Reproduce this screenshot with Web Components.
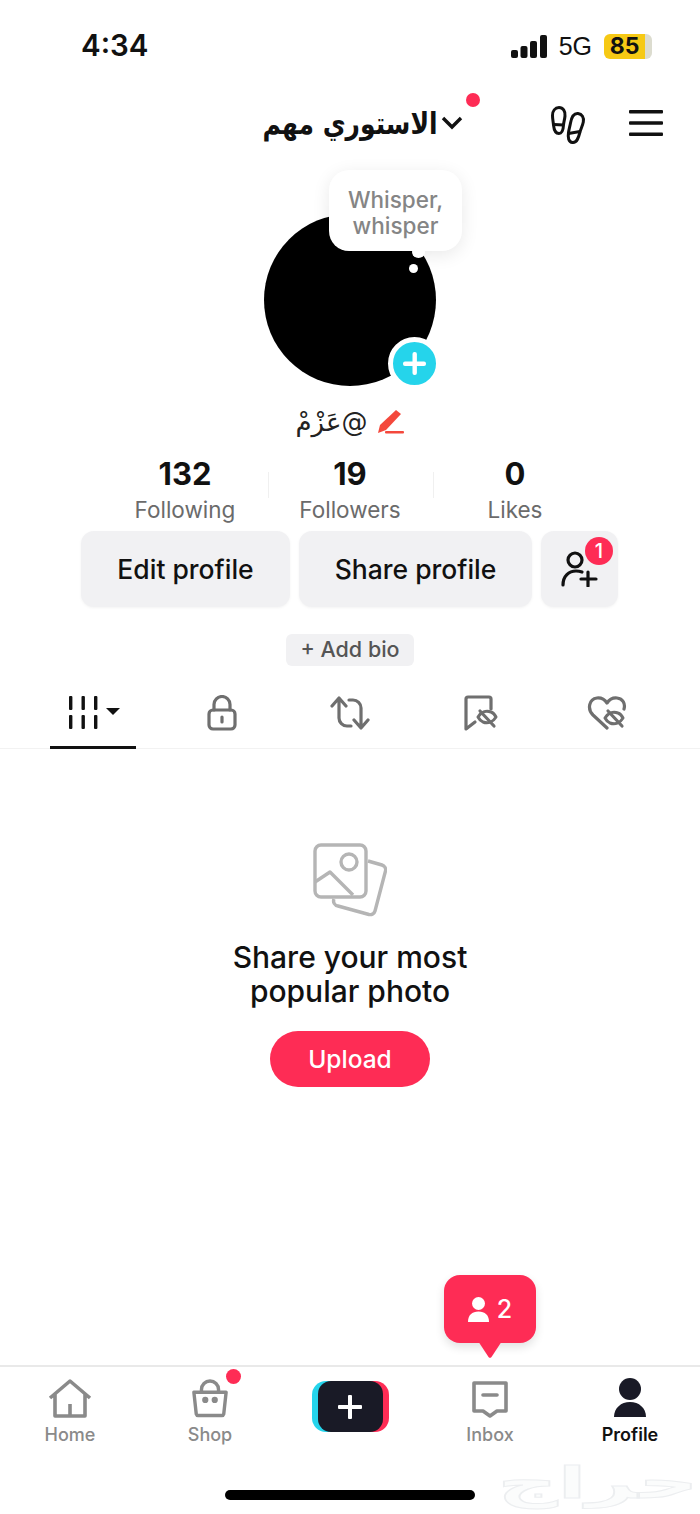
<!DOCTYPE html>
<html lang="en">
<head>
<meta charset="utf-8">
<title>Profile</title>
<style>
  html, body { margin: 0; background: #fff; }
  body { font-family: Inter, "Liberation Sans", sans-serif; color: #111; }
</style>
</head>
<body>
<profile-app>
  <status-bar slot="top" time="4:34" level="85"></status-bar>
  <top-nav slot="top" title="الاستوري مهم"></top-nav>
  <profile-head slot="top" handle="@عَزْمْ" note="Whisper, whisper"></profile-head>
  <profile-stats slot="top"></profile-stats>
  <profile-actions slot="top"></profile-actions>
  <profile-tabs slot="top"></profile-tabs>
  <empty-state slot="top"></empty-state>
  <friend-badge slot="over" count="2"></friend-badge>
  <bottom-nav slot="bottom"></bottom-nav>
</profile-app>

<script>
class ProfileApp extends HTMLElement {
  constructor() {
    super();
    this.attachShadow({ mode: 'open' }).innerHTML = `
    <style>
      :host { display: flex; flex-direction: column; position: relative; width: 700px; height: 1514px; overflow: hidden; background: #fff; }
      .top { display: block; flex: 1; }
    </style>
    <div class="top"><slot name="top"></slot></div>
    <slot name="over"></slot>
    <slot name="bottom"></slot>`;
  }
}

class StatusBar extends HTMLElement {
  constructor() {
    super();
    this.attachShadow({ mode: 'open' }).innerHTML = `
    <style>
      :host { display: flex; align-items: center; justify-content: space-between; height: 92px; padding: 0 48px 0 81px; box-sizing: border-box; }
      .time { font: 600 29.500px/1 Inter, sans-serif; color: #111; }
      .right { display: flex; align-items: center; }
      svg { display: block; }
      .net { font: 400 25px/1 "Liberation Sans", sans-serif; margin: 0 12px; }
      .batt { display: flex; align-items: center; justify-content: center; width: 41px; height: 25px; background: #f6c915; border-radius: 6px 0 0 6px; font: 700 23px/1 Inter, sans-serif; }
      .end { width: 7px; height: 25px; background: #dcdccf; border-radius: 0 6px 6px 0; }
    </style>
    <span class="time">${this.getAttribute('time')}</span>
    <div class="right">
      <svg width="36" height="23" viewBox="0 0 36 23" fill="#111">
        <rect x="0" y="15" width="7" height="8" rx="2"/><rect x="9.5" y="11" width="7" height="12" rx="2"/>
        <rect x="19" y="6" width="7" height="17" rx="2"/><rect x="29" y="0" width="7" height="23" rx="2"/>
      </svg>
      <span class="net">5G</span>
      <span class="batt">${this.getAttribute('level')}</span><span class="end"></span>
    </div>`;
  }
}

class TopNav extends HTMLElement {
  constructor() {
    super();
    this.attachShadow({ mode: 'open' }).innerHTML = `
    <style>
      :host { display: flex; align-items: center; height: 62px; position: relative; padding-left: 262px; box-sizing: border-box; }
      .title { font: 700 25px/1 "DejaVu Sans", sans-serif; color: #111; width: 176px; white-space: nowrap; display: flex; justify-content: center; transform: scaleY(1.200); }
      .chev { margin-left: 3px; }
      .dot { position: absolute; left: 466px; top: 1px; width: 14px; height: 14px; border-radius: 50%; background: #fe2c55; }
      .feet { margin-left: 87px; overflow: visible; }
      .menu { margin-left: 43px; }
      svg { display: block; }
    </style>
    <span class="title" dir="rtl">${this.getAttribute('title')}</span>
    <svg class="chev" width="22" height="14" viewBox="0 0 22 14" fill="none" stroke="#111" stroke-width="3.400"><path d="M2 2l9 9 9-9"/></svg>
    <span class="dot"></span>
    <svg class="feet" width="36" height="38" viewBox="0 0 36 38" fill="none" stroke="#111" stroke-width="3">
      <path d="M9 3.500c4 0 6.500 3.500 6 8.500-.4 4-1.300 6-1.500 9-.2 4-.6 8.500-4.500 8.500-3.500 0-5-3.500-5.500-8.500C3.200 17.500 2.500 15 2.500 11.500 2.500 7 5 3.500 9 3.500z"/>
      <path d="M4 20.500l9.500.5"/>
      <path d="M28 9.500c4 .5 6.200 4 5.300 8.500-.7 3.500-2.300 6.500-3.300 10-1.200 4.500-2.500 11-7.500 10.500-4-.4-4.800-5-4-10 .5-3.300 1.300-6 2-9.500C21.500 13.500 23.500 9 28 9.500z"/>
      <path d="M18.500 29.500l11.500-2"/>
    </svg>
    <svg class="menu" width="34" height="26" viewBox="0 0 34 26" fill="#111">
      <rect width="34" height="3.600" rx="1"/><rect y="11.200" width="34" height="3.600" rx="1"/><rect y="22.400" width="34" height="3.600" rx="1"/>
    </svg>`;
  }
}

class ProfileHead extends HTMLElement {
  constructor() {
    super();
    this.attachShadow({ mode: 'open' }).innerHTML = `
    <style>
      :host { display: flex; flex-direction: column; align-items: center; padding-top: 60px; }
      .avatar { position: relative; width: 172px; height: 172px; border-radius: 50%; background: #000; }
      .note { position: absolute; left: 65px; top: -44px; width: 133px; height: 81px; box-sizing: border-box; padding: 5px 12px 0; display: flex; align-items: center; justify-content: center; text-align: center; background: #fff; border-radius: 20px; box-shadow: 0 4px 18px rgba(0,0,0,.09); font: 500 22.500px/26px Inter, sans-serif; color: #858585; }
      .bump { position: absolute; left: 148px; top: 32px; width: 13px; height: 12px; background: #fff; border-radius: 50%; }
      .spot { position: absolute; left: 145px; top: 50px; width: 9px; height: 9px; background: #fff; border-radius: 50%; }
      .add { position: absolute; left: 124px; top: 123px; width: 43px; height: 43px; border: 5px solid #fff; border-radius: 50%; background: #25d4eb; display: flex; align-items: center; justify-content: center; }
      .handle { display: flex; align-items: center; gap: 10px; height: 42px; margin-top: 15px; }
      .name { font: 400 26px/42px "DejaVu Sans", sans-serif; color: #222; }
      svg { display: block; }
    </style>
    <div class="avatar">
      <div class="note">${this.getAttribute('note')}</div>
      <span class="bump"></span>
      <span class="spot"></span>
      <span class="add">
        <svg width="23" height="23" viewBox="0 0 23 23" fill="#fff"><rect x="9.500" y="0" width="4.400" height="23" rx="2"/><rect x="0" y="9.500" width="23" height="4.400" rx="2"/></svg>
      </span>
    </div>
    <div class="handle">
      <span class="name" dir="rtl">${this.getAttribute('handle')}</span>
      <svg width="27" height="24" viewBox="0 0 27 24"><path d="M19 0l5 4L9 20l-8 3 2-8z" fill="#f4483c"/><rect x="8" y="21" width="19" height="2.400" rx="1" fill="#f4483c"/></svg>
    </div>`;
  }
}

class ProfileStats extends HTMLElement {
  constructor() {
    super();
    const stats = [['132', 'Following'], ['19', 'Followers'], ['0', 'Likes']];
    this.attachShadow({ mode: 'open' }).innerHTML = `
    <style>
      :host { display: flex; justify-content: center; padding-top: 13px; }
      .stat { width: 165px; text-align: center; position: relative; height: 75px; }
      .stat + .stat::before { content: ""; position: absolute; left: 0; top: 16px; width: 1px; height: 26px; background: #f0f0f0; }
      b { display: block; font: 700 31px/36px Inter, sans-serif; color: #111; }
      span { display: block; font: 400 22.500px/36px Inter, sans-serif; color: #6b6b6b; }
    </style>
    ${stats.map(s => `<div class="stat"><b>${s[0]}</b><span>${s[1]}</span></div>`).join('')}`;
  }
}

class ProfileActions extends HTMLElement {
  constructor() {
    super();
    this.attachShadow({ mode: 'open' }).innerHTML = `
    <style>
      :host { display: flex; flex-direction: column; align-items: center; }
      .row { display: flex; gap: 9px; width: 537px; height: 76px; margin-left: -1px; }
      .btn { display: flex; align-items: center; justify-content: center; background: #f1f1f3; border-radius: 13px; box-shadow: 0 1px 3px rgba(0,0,0,.05); font: 500 26.500px/1 Inter, sans-serif; color: #111; position: relative; }
      .edit { width: 209px; }
      .share { width: 233px; }
      .friends { width: 77px; }
      .count { position: absolute; left: 44px; top: 6px; width: 28px; height: 28px; border-radius: 50%; background: #fe2c55; color: #fff; font: 500 20px/28px Inter, sans-serif; text-align: center; }
      .bio { margin-top: 27px; width: 128px; height: 32px; display: flex; align-items: center; justify-content: center; background: #f1f1f3; border-radius: 6px; font: 500 21.500px/1 Inter, sans-serif; color: #555; }
      svg { display: block; }
    </style>
    <div class="row">
      <div class="btn edit">Edit profile</div>
      <div class="btn share">Share profile</div>
      <div class="btn friends">
        <svg width="38" height="36" viewBox="0 0 38 36" fill="none" stroke="#111" stroke-width="3.200" stroke-linecap="round"><circle cx="14" cy="9" r="7"/><path d="M2 34c0-9 6-14 13-14 2 0 4 .3 6 1"/><path d="M27 21v14M20 28h15"/></svg>
        <span class="count">1</span>
      </div>
    </div>
    <div class="bio">+ Add bio</div>`;
  }
}

class ProfileTabs extends HTMLElement {
  constructor() {
    super();
    const g = 'fill="none" stroke="#6f6f6f" stroke-width="3.200" stroke-linecap="round" stroke-linejoin="round"';
    this.attachShadow({ mode: 'open' }).innerHTML = `
    <style>
      :host { display: grid; grid-template-columns: repeat(5, 128.500px); justify-content: center; height: 68px; border-bottom: 1px solid #f2f2f2; box-sizing: border-box; margin-top: 15px; }
      .tab { display: flex; align-items: center; justify-content: center; position: relative; padding-bottom: 4px; }
      .tab.on::after { content: ""; position: absolute; left: 21px; bottom: -1px; width: 86px; height: 3px; background: #111; }
      .tab.on svg { margin-left: 3px; }
      .mark { margin-left: 6px; }
      svg { display: block; }
    </style>
    <div class="tab on">
      <svg width="52" height="34" viewBox="0 0 52 34" fill="#111">
        <rect x="0" y="0" width="3.400" height="14" rx="1"/><rect x="12.500" y="0" width="3.400" height="14" rx="1"/><rect x="25" y="0" width="3.400" height="14" rx="1"/>
        <rect x="0" y="19" width="3.400" height="14" rx="1"/><rect x="12.500" y="19" width="3.400" height="14" rx="1"/><rect x="25" y="19" width="3.400" height="14" rx="1"/>
        <path d="M37 12h14l-7 7z"/>
      </svg>
    </div>
    <div class="tab">
      <svg width="30" height="36" viewBox="0 0 30 36" ${g}><rect x="2" y="15" width="26" height="19" rx="4"/><path d="M7 15V9.500a8 8 0 0 1 16 0V15"/><path d="M15 22v5"/></svg>
    </div>
    <div class="tab">
      <svg width="40" height="34" viewBox="0 0 40 34" ${g}><path d="M2 10l7-8 7 8M9 3v19a8 8 0 0 0 8 8h4"/><path d="M38 24l-7 8-7-8M31 31V12a8 8 0 0 0-8-8h-4"/></svg>
    </div>
    <div class="tab">
      <svg class="mark" width="36" height="36" viewBox="0 0 36 36" ${g}><path d="M27 14V4a2 2 0 0 0-2-2H4a2 2 0 0 0-2 2v30l9-7"/><path d="M14 22c3-5 8-7 13-5 3 1 4 3 5 5-3 5-8 7-13 5-2-1-4-3-5-5z" stroke-width="3"/><path d="M16 16l14 15"/></svg>
    </div>
    <div class="tab">
      <svg width="40" height="34" viewBox="0 0 40 34" ${g}><path d="M20 32L6 19C0 13 2 3 10 2c5-.5 8 2 10 5 2-3 5-5.500 10-5 6 .5 8.500 6 7 11"/><path d="M18 22c3-5 8-7 13-5 3 1 4 3 5 5-3 5-8 7-13 5-2-1-4-3-5-5z" stroke-width="3"/><path d="M21 15l14 15"/></svg>
    </div>`;
  }
}

class EmptyState extends HTMLElement {
  constructor() {
    super();
    this.attachShadow({ mode: 'open' }).innerHTML = `
    <style>
      :host { display: flex; flex-direction: column; align-items: center; padding-top: 94px; }
      h2 { margin: 21px 0 0; font: 500 30px/34px Inter, sans-serif; color: #111; text-align: center; }
      .upload { margin-top: 23px; width: 160px; height: 56px; display: flex; align-items: center; justify-content: center; border-radius: 28px; background: #fe2c55; color: #fff; font: 500 24.500px/1 Inter, sans-serif; }
      svg { display: block; }
    </style>
    <svg width="74" height="76" viewBox="0 0 74 76" fill="none" stroke="#b5b5b5" stroke-width="3.400" stroke-linejoin="round">
      <rect x="2" y="2" width="51" height="52" rx="6"/>
      <circle cx="36" cy="19" r="8"/>
      <path d="M2 39l15-10 23 23"/>
      <path d="M55 18l14 4a5 5 0 0 1 3.500 6L62 68a5 5 0 0 1-6 3.500l-31-8.500a5 5 0 0 1-4-7"/>
    </svg>
    <h2>Share your most<br>popular photo</h2>
    <div class="upload">Upload</div>`;
  }
}

class FriendBadge extends HTMLElement {
  constructor() {
    super();
    this.attachShadow({ mode: 'open' }).innerHTML = `
    <style>
      :host { position: absolute; left: 444px; top: 1275px; width: 92px; height: 68px; background: #fe2c55; border-radius: 16px; box-shadow: 0 4px 10px rgba(0,0,0,.12); display: flex; align-items: center; justify-content: center; gap: 8px; color: #fff; font: 500 25px/1 Inter, sans-serif; }
      .tail { position: absolute; left: 34px; top: 66px; }
      svg { display: block; }
    </style>
    <svg width="21" height="25" viewBox="0 0 21 25" fill="#fff"><circle cx="10.500" cy="6.500" r="6.500"/><path d="M0 25c0-7 4-10.500 10.500-10.500S21 18 21 25z"/></svg>
    <span>${this.getAttribute('count')}</span>
    <svg class="tail" width="24" height="17" viewBox="0 0 24 17" fill="#fe2c55"><path d="M0 0h24L13.500 16a2 2 0 0 1-3 0z"/></svg>`;
  }
}

class BottomNav extends HTMLElement {
  constructor() {
    super();
    const g = 'fill="none" stroke="#8a8a8a" stroke-width="3.600" stroke-linejoin="round"';
    this.attachShadow({ mode: 'open' }).innerHTML = `
    <style>
      :host { display: block; height: 149px; position: relative; border-top: 2px solid #e9e9e9; box-sizing: border-box; }
      .items { display: grid; grid-template-columns: repeat(5, 140px); height: 78px; padding-top: 11px; }
      .item { display: flex; flex-direction: column; align-items: center; position: relative; font: 500 18px/22px Inter, sans-serif; color: #8a8a8a; }
      .item svg { height: 40px; display: block; margin-bottom: 6px; }
      .item.on { color: #111; font-weight: 600; }
      .dot { position: absolute; left: 86px; top: -9px; width: 15px; height: 15px; border-radius: 50%; background: #fe2c55; }
      .plus { width: 77px; height: 51px; margin-top: 3px; border-radius: 14px; position: relative; background: linear-gradient(90deg, #25d4eb 50%, #fe2c55 50%); }
      .plus div { position: absolute; left: 6px; right: 6px; top: 0; bottom: 0; border-radius: 13px; background: #191a26; display: flex; align-items: center; justify-content: center; }
      .plus svg { margin: 0; height: 24px; }
      .home-bar { position: absolute; left: 225px; top: 123px; width: 250px; height: 10px; border-radius: 5px; background: #000; }
      .mark { position: absolute; left: 500px; top: 88px; width: 196px; text-align: center; font: 700 44px/56px "DejaVu Sans", sans-serif; color: #fbfcfc; -webkit-text-stroke: 1px #eceef0; transform: scaleX(1.900); pointer-events: none; }
    </style>
    <div class="items">
      <div class="item">
        <svg width="44" height="40" viewBox="0 0 44 40" ${g}><path d="M2 20L22 3l20 17M7 16v22h30V16"/><path d="M22 26v12"/></svg>
        Home
      </div>
      <div class="item">
        <svg width="36" height="40" viewBox="0 0 38 40" ${g}><path d="M2 14h34l-2.500 23a2 2 0 0 1-2 1.500H6.500a2 2 0 0 1-2-1.500z"/><path d="M10 14v-3a9 9 0 0 1 18 0v3"/><circle cx="14" cy="22" r="1.500" fill="#8a8a8a"/><circle cx="24" cy="22" r="1.500" fill="#8a8a8a"/></svg>
        <span class="dot"></span>
        Shop
      </div>
      <div class="item">
        <div class="plus"><div>
          <svg width="24" height="24" viewBox="0 0 24 24" fill="#fff"><rect x="10" width="4" height="24" rx="1"/><rect y="10" width="24" height="4" rx="1"/></svg>
        </div></div>
      </div>
      <div class="item">
        <svg width="38" height="40" viewBox="0 0 38 40" ${g}><path d="M3 5h32v28H26l-7 5-7-5H3z"/><path d="M12 17h14" stroke-linecap="round"/></svg>
        Inbox
      </div>
      <div class="item on">
        <svg width="34" height="40" viewBox="0 0 34 40" fill="#191a26"><circle cx="17" cy="11" r="11"/><path d="M1 39c0-9 7-15 16-15s16 6 16 15z"/></svg>
        Profile
      </div>
    </div>
    <span class="home-bar"></span>
    <span class="mark" dir="rtl">حراج</span>`;
  }
}

customElements.define('profile-app', ProfileApp);
customElements.define('status-bar', StatusBar);
customElements.define('top-nav', TopNav);
customElements.define('profile-head', ProfileHead);
customElements.define('profile-stats', ProfileStats);
customElements.define('profile-actions', ProfileActions);
customElements.define('profile-tabs', ProfileTabs);
customElements.define('empty-state', EmptyState);
customElements.define('friend-badge', FriendBadge);
customElements.define('bottom-nav', BottomNav);
</script>
</body>
</html>
